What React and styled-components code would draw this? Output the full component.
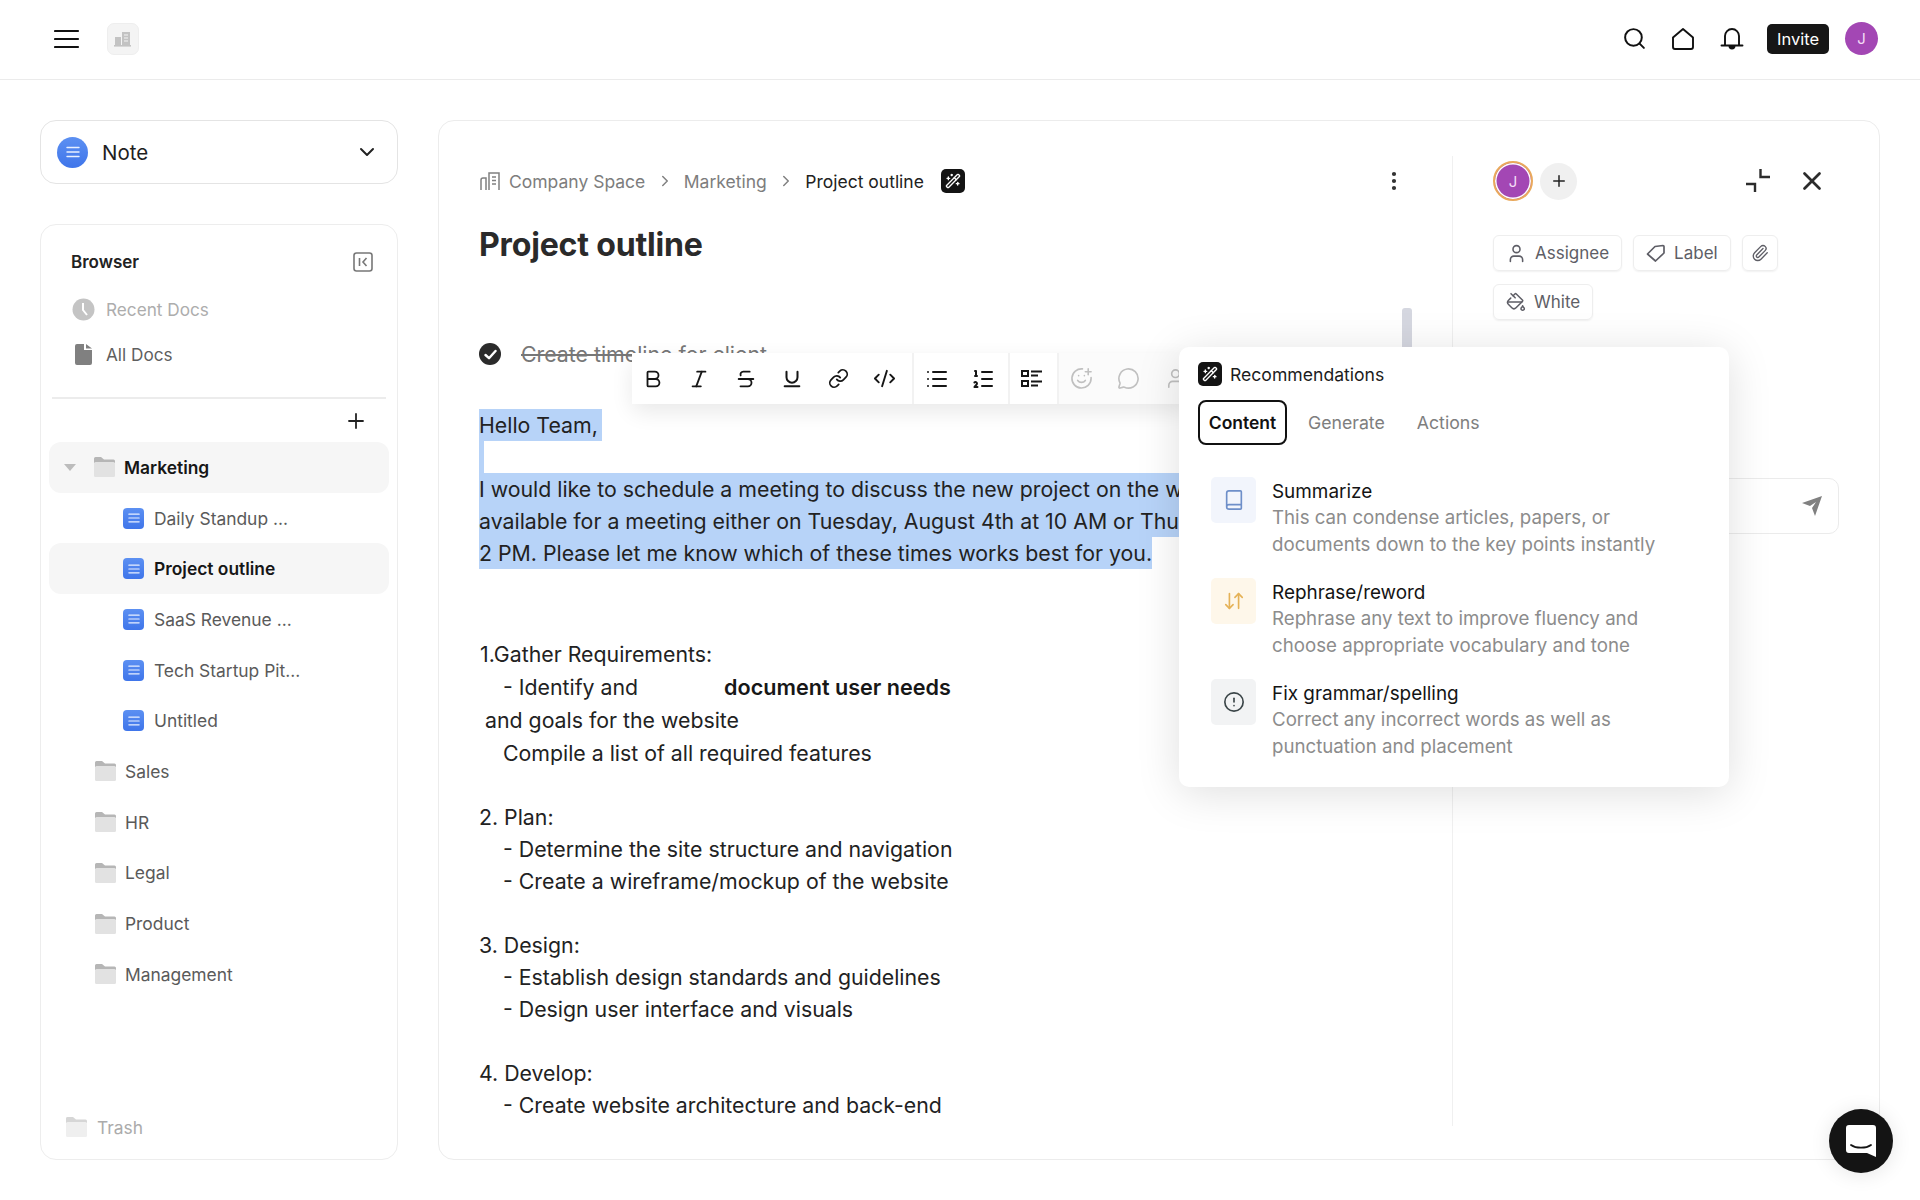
import React from "react";
import styled, { createGlobalStyle } from "styled-components";
import {
  Search, ChevronDown, ChevronRight, Plus, X, User, Paperclip, PaintBucket,
  EllipsisVertical, WandSparkles, Bold, Italic, Strikethrough, Underline, Link,
  CodeXml, List, ListOrdered, SmilePlus, MessageCircle, Book, ArrowDownUp, CircleAlert,
} from "lucide-react";

const Global = createGlobalStyle`
  html, body { margin: 0; padding: 0; background: #fff; }
  body { font-family: Inter, "Noto Sans", sans-serif; color: #222; width: 1920px; height: 1200px; overflow: hidden; -webkit-font-smoothing: antialiased; }
  * { box-sizing: border-box; }
`;

const Page = styled.div`width: 1920px; height: 1200px; position: relative; overflow: hidden; background: #fff;`;
const Header = styled.header`height: 80px; border-bottom: 1px solid #ebebeb; display: flex; align-items: center; justify-content: space-between; padding: 0 42px 2px 54px;`;
const HeaderLeft = styled.div`display: flex; align-items: center; gap: 27px;`;
const LogoTile = styled.div`width: 32px; height: 32px; border-radius: 7px; background: #f4f4f4; border: 1px solid #eeeeee; display: flex; align-items: center; justify-content: center;`;
const HeaderRight = styled.div`display: flex; align-items: center;`;
const TopIcon = styled.span`display: flex; width: 28px; height: 28px; align-items: center; justify-content: center; margin-right: 20.5px; color: #111;`;
const Invite = styled.span`margin-left: 1px; width: 62px; height: 30px; background: #161616; color: #fff; border-radius: 5px; font-size: 16.5px; display: flex; align-items: center; justify-content: center;`;
const TopAvatar = styled.span`margin-left: 16px; width: 33px; height: 33px; border-radius: 50%; background: #a347b4; color: #f3dcf6; font-size: 15px; display: flex; align-items: center; justify-content: center;`;

const Body = styled.div`display: grid; grid-template-columns: 358px 1442px; column-gap: 40px; padding: 40px 40px 0; height: 1080px;`;
const SideCol = styled.aside`display: flex; flex-direction: column; gap: 40px; height: 1040px;`;
const NoteSelect = styled.div`height: 64px; border: 1px solid #e4e4e4; border-radius: 16px; display: flex; align-items: center; padding: 0 18px 0 16px; font-size: 20.5px; color: #1e1e1e;`;
const NoteDot = styled.span`width: 31px; height: 31px; border-radius: 50%; background: linear-gradient(#5c90f2, #3f75ea); display: flex; align-items: center; justify-content: center; margin-right: 14px;`;
const NoteLabel = styled.span`flex: 1;`;
const BrowserCard = styled.div`flex: 1; border: 1px solid #ededed; border-radius: 16px; padding: 0 8px 0 8px; display: flex; flex-direction: column;`;
const BrowserHead = styled.div`height: 62px; padding: 12px 16px 0 22px; display: flex; align-items: center; justify-content: space-between; font-size: 17px; font-weight: 600; color: #222;`;
const NavRow = styled.div`height: 45px; display: flex; align-items: center; padding-left: 22px; gap: 11px; font-size: 17.2px; color: ${p => p.$muted ? "#adadad" : "#5f5f5f"};`;
const NavIcon = styled.span`width: 24px; display: flex; justify-content: center;`;
const Divider = styled.div`height: 2px; background: #ececec; margin: 20px 3px 0;`;
const AddRow = styled.div`height: 43px; display: flex; align-items: center; justify-content: flex-end; padding-right: 21px; color: #222;`;
const TreeRow = styled.div`height: 50.7px; flex: none; display: flex; align-items: center; border-radius: 12px; font-size: 17.4px; padding-left: ${p => p.$indent}px; gap: ${p => p.$gap}px; background: ${p => p.$active ? "#f6f6f6" : "transparent"}; color: ${p => p.$active ? "#161616" : "#5a5a5a"}; font-weight: ${p => p.$active ? 600 : 400};`;
const Caret = styled.span`width: 0; height: 0; border-left: 6px solid transparent; border-right: 6px solid transparent; border-top: 7px solid #bcbcbc; margin-left: -31px; margin-right: 9px;`;
const TrashRow = styled.div`margin-top: auto; margin-bottom: 7px; height: 50px; display: flex; align-items: center; padding-left: 17px; gap: 10px; font-size: 17.4px; color: #ababab;`;

const MainCard = styled.main`height: 1040px; border: 1px solid #ececec; border-radius: 16px; position: relative; display: flex;`;
const EditorCol = styled.section`width: 1013px; height: 1006px; padding-left: 40px; flex: none; position: relative; overflow: hidden;`;
const Crumbs = styled.div`height: 120px; padding: 42px 0 0; display: flex; align-items: flex-start; font-size: 17.5px; color: #7d7d7d; position: relative;`;
const CrumbInner = styled.div`height: 36px; display: flex; align-items: center; width: 100%;`;
const CrumbIcon = styled.span`display: flex; margin: 0 8px 0 1px;`;
const Crumb = styled.span`color: ${p => p.$current ? "#222" : "#7d7d7d"}; white-space: nowrap;`;
const Sep = styled.span`display: flex; width: 38.5px; justify-content: center; color: #808080;`;
const WandGap = styled.span`width: 17px;`;
const WandTile = styled.span`width: ${p => p.$size}px; height: ${p => p.$size}px; background: #141414; color: #fff; border-radius: 5px; display: flex; align-items: center; justify-content: center; flex: none;`;
const Dots = styled.span`margin-left: auto; margin-right: 46px; display: flex; color: #333;`;
const Title = styled.h1`margin: 0; font-size: 32.1px; line-height: 46px; font-weight: 700; color: #2a2a2a; letter-spacing: -0.2px; position: absolute; top: 101px;`;
const Doc = styled.div`position: absolute; left: 40px; top: 217px; width: 960px; font-size: 21.3px;`;
const TaskRow = styled.div`height: 32px; display: flex; align-items: center; gap: 20px; color: #777; text-decoration: line-through; white-space: nowrap;`;
const Check = styled.span`width: 22px; height: 22px; border-radius: 50%; background: #2b2b2b; display: flex; align-items: center; justify-content: center; flex: none;`;
const Selected = styled.div`margin-top: 39px; margin-bottom: 69px;`;
const SelLine = styled.div`height: 32px; line-height: 32px; white-space: nowrap; background: #b7d3f8; width: ${p => p.$w};`;
const Line = styled.div`height: ${p => p.$h || 32}px; line-height: ${p => p.$h || 32}px; white-space: nowrap; padding-left: ${p => p.$indent || 0}px;`;
const Strong = styled.strong`font-weight: 600; font-size: 21.6px; margin-left: 80px; color: #171717;`;
const Thumb = styled.span`position: absolute; left: 963px; top: 187px; width: 10px; height: 40px; background: #d5d7e0; border-radius: 3px 3px 0 0;`;

const RightPanel = styled.section`flex: none; width: 427px; height: 970px; margin-top: 35px; border-left: 1px solid #f0f0f0; padding: 4px 0 0 40px;`;
const PanelTop = styled.div`height: 42px; display: flex; align-items: center;`;
const RingAvatar = styled.span`width: 40px; height: 40px; border-radius: 50%; background: #a347b4; border: 2px solid #e9a95c; box-shadow: inset 0 0 0 1.5px #fff; color: #f3dcf6; font-size: 15px; display: flex; align-items: center; justify-content: center;`;
const AddCircle = styled.span`margin-left: 7px; width: 37px; height: 37px; border-radius: 50%; background: #f0f0f0; display: flex; align-items: center; justify-content: center; color: #222;`;
const PanelAction = styled.span`display: flex; color: #2c2c2c; margin-left: ${p => p.$ml}px;`;
const Chips = styled.div`display: flex; flex-wrap: wrap; gap: 13px 11px; width: 320px; margin-top: 33px;`;
const Chip = styled.span`height: 36px; border: 1px solid #eeeeee; border-radius: 6px; box-shadow: 0 1px 2px rgba(0,0,0,.06); padding: 0 ${p => p.$pr ?? 12}px 0 ${p => p.$pl ?? 12}px; display: flex; align-items: center; gap: 8px; font-size: 17px; color: #5e5e66;`;
const CommentBox = styled.div`margin-top: 158px; width: 346px; height: 56px; border: 1px solid #ebebeb; border-radius: 10px; display: flex; align-items: center; justify-content: flex-end; padding-right: 15px; color: #7f7f7f;`;

const Toolbar = styled.div`position: absolute; left: 193px; top: 232px; height: 51px; display: flex; background: #fff; border-radius: 8px; box-shadow: 0 8px 22px rgba(0,0,0,.09); z-index: 2;`;
const ToolGroup = styled.div`display: flex; align-items: center; height: 100%; padding: ${p => p.$pad}; gap: ${p => p.$gap}px; border-left: ${p => p.$sep ? "2px solid #f2f2f2" : "none"}; background: ${p => p.$faded ? "#fbfbfb" : "#fff"}; color: ${p => p.$faded ? "#c0c0c0" : "#161616"};`;
const ToolBtn = styled.span`width: 26px; display: flex; justify-content: center;`;

const Popup = styled.div`position: absolute; left: 740px; top: 226px; width: 550px; height: 440px; background: #fff; border-radius: 10px; box-shadow: 0 6px 44px rgba(0,0,0,.13); z-index: 3; padding: 15px 19px;`;
const PopHead = styled.div`height: 24px; display: flex; align-items: center; gap: 8px; font-size: 17.6px; color: #1c1c1c;`;
const PopHeadText = styled.span``;
const Tabs = styled.div`display: flex; align-items: center; margin-top: 14px; height: 45px;`;
const ActiveTab = styled.span`width: 89px; height: 45px; border: 2.5px solid #111; border-radius: 8px; display: flex; align-items: center; justify-content: center; font-size: 17.5px; font-weight: 600; color: #111;`;
const Tab = styled.span`font-size: 17.7px; color: #7e7e7e; margin-left: ${p => p.$ml}px;`;
const ItemList = styled.div`margin-top: 32px; padding-left: 13px; display: flex; flex-direction: column; gap: 20px;`;
const Item = styled.div`display: flex; gap: 16px; height: 81px;`;
const ItemIcon = styled.span`width: 45px; height: 46px; border-radius: 5px; background: ${p => p.$bg}; color: ${p => p.$fg}; display: flex; align-items: center; justify-content: center; flex: none;`;
const ItemText = styled.div``;
const ItemTitle = styled.div`font-size: 18.9px; line-height: 27px; padding-top: 1px; margin-bottom: -1px; color: #141414;`;
const ItemDesc = styled.div`font-size: 18.7px; line-height: 27px; color: #8c8c8c; white-space: nowrap;`;

const Launcher = styled.div`position: absolute; left: 1829px; top: 1109px; width: 64px; height: 64px; border-radius: 50%; background: #141414; box-shadow: 0 2px 20px rgba(0,0,0,.1); display: flex; align-items: center; justify-content: center; z-index: 5;`;

const Hamburger = () => (
  <svg width="26" height="20" viewBox="0 0 26 20"><path d="M1 2h23M1 10h23M1 18h23" stroke="#111" strokeWidth="2.2" strokeLinecap="round" /></svg>
);
const BuildingLogo = () => (
  <svg width="18" height="16" viewBox="0 0 18 16" fill="#c3c3c3"><rect x="1" y="6" width="6" height="8" /><rect x="8" y="1" width="8" height="13" /><rect x="0" y="14" width="17" height="1.6" /><path d="M10 4h4M10 7h4M10 10h4" stroke="#f4f4f4" strokeWidth="1" /></svg>
);
const HomeIcon = () => (
  <svg width="24" height="24" viewBox="0 0 24 24" fill="none" stroke="#111" strokeWidth="1.9" strokeLinejoin="round"><path d="M2 10.5 12 2l10 8.5V20a2 2 0 0 1-2 2H4a2 2 0 0 1-2-2Z" /></svg>
);
const BellIcon = () => (
  <svg width="24" height="26" viewBox="0 0 24 26" fill="none" stroke="#111" strokeWidth="1.9" strokeLinecap="round" strokeLinejoin="round"><path d="M5 19V10a7 7 0 0 1 14 0v9M1.5 19.5h21" /><path d="M9.5 20a2.5 2.5 0 0 0 5 0Z" fill="#111" /></svg>
);
const LinesIcon = ({ w = 14 }) => (
  <svg width={w} height={w} viewBox="0 0 14 14" fill="none" stroke="#e8f0ff" strokeWidth="1.4" strokeLinecap="round"><path d="M1 2.5h12M1 7h12M1 11.5h12" /></svg>
);
const Chevron = () => <ChevronDown size={24} strokeWidth={2} color="#222" />;
const CollapseIcon = () => (
  <svg width="20" height="20" viewBox="0 0 20 20" fill="none" stroke="#777" strokeWidth="1.6"><rect x="1" y="1" width="18" height="18" rx="2.5" /><path d="M6.5 6v8M13.5 6l-3.5 4 3.5 4" /></svg>
);
const ClockIcon = () => (
  <svg width="23" height="23" viewBox="0 0 23 23"><circle cx="11.5" cy="11.5" r="11" fill="#c4c4c4" /><path d="M11 5v7l4 5" stroke="#fff" strokeWidth="2" fill="none" /></svg>
);
const FileIcon = () => (
  <svg width="17" height="21" viewBox="0 0 17 21"><path d="M2 0h7v6h8v13a2 2 0 0 1-2 2H2a2 2 0 0 1-2-2V2a2 2 0 0 1 2-2ZM11 0l6 4.5h-6Z" fill="#808080" /></svg>
);
const Folder = ({ faded }) => (
  <svg width="21" height="20" viewBox="0 0 21 20" opacity={faded ? .55 : 1}><path d="M1.5 0H7l3 2.5h9.5A1.5 1.5 0 0 1 21 4v2H0V1.5A1.5 1.5 0 0 1 1.5 0Z" fill="#b6b6b6" /><rect x="0" y="5" width="21" height="15" rx="1.5" fill="#e2e2e2" /></svg>
);
const DocTile = styled.span`width: 21px; height: 21px; border-radius: 4px; background: linear-gradient(#5c90f2, #3f75ea); display: flex; align-items: center; justify-content: center; flex: none;`;
const BuildingOutline = () => (
  <svg width="21" height="19" viewBox="0 0 21 19" fill="none" stroke="#808080" strokeWidth="1.5"><path d="M1 18V8a2 2 0 0 1 2-2h3v12M9 18V1h10v17M12 5h4M12 8.5h4M12 12h4" /></svg>
);
const CheckMark = () => (
  <svg width="13" height="11" viewBox="0 0 13 11" fill="none" stroke="#fff" strokeWidth="2.4" strokeLinecap="round" strokeLinejoin="round"><path d="M1.5 6 5 9.2 11.5 2" /></svg>
);
const CollapseArrows = () => (
  <svg width="26" height="24" viewBox="0 0 26 24" fill="none" stroke="#2c2c2c" strokeWidth="2.4"><path d="M15.5 0v8H25M1 15h9v8" /></svg>
);
const TagIcon = () => (
  <svg width="20" height="20" viewBox="0 0 20 20" fill="none" stroke="#5e5e66" strokeWidth="1.7" strokeLinejoin="round"><path d="M1.5 11 9 3.5 17 2.5a1 1 0 0 1 1 1V10L9.5 18Z" /></svg>
);
const TaskList = () => (
  <svg width="22" height="20" viewBox="0 0 22 20" fill="none" stroke="#161616"><rect x="1" y="2" width="6" height="5" strokeWidth="2" /><rect x="1" y="12" width="6" height="5" strokeWidth="2" /><path d="M10 2.5h11M10 6.5h7M10 12.5h11M10 16.5h7" strokeWidth="2" /></svg>
);
const SendIcon = () => (
  <svg width="22" height="22" viewBox="0 0 22 22" fill="#808080"><path d="M21 1 14 21l-3-8 4-6-6 4-8-3Z" /></svg>
);
const MessengerIcon = () => (
  <svg width="30" height="33" viewBox="0 0 30 33"><path d="M3 0h24a3 3 0 0 1 3 3v29l-9-4H3a3 3 0 0 1-3-3V3a3 3 0 0 1 3-3Z" fill="#fff" /><path d="M5 20c5 3.6 15 3.6 20 0" stroke="#141414" strokeWidth="1.8" fill="none" strokeLinecap="round" /></svg>
);

const docs = ["Daily Standup ...", "Project outline", "SaaS Revenue ...", "Tech Startup Pit...", "Untitled"];
const folders = ["Sales", "HR", "Legal", "Product", "Management"];
const items = [
  { t: "Summarize", d: ["This can condense articles, papers, or", "documents down to the key points instantly"], bg: "#f2f5fc", fg: "#6e8fc9", I: Book },
  { t: "Rephrase/reword", d: ["Rephrase any text to improve fluency and", "choose appropriate vocabulary and tone"], bg: "#fef7ea", fg: "#e5b257", I: ArrowDownUp },
  { t: "Fix grammar/spelling", d: ["Correct any incorrect words as well as", "punctuation and placement"], bg: "#f2f3f4", fg: "#3b4548", I: CircleAlert },
];

export default function App() {
  return (
    <Page>
      <Global />
      <Header>
        <HeaderLeft>
          <Hamburger />
          <LogoTile><BuildingLogo /></LogoTile>
        </HeaderLeft>
        <HeaderRight>
          <TopIcon><Search size={25} strokeWidth={1.9} /></TopIcon>
          <TopIcon><HomeIcon /></TopIcon>
          <TopIcon><BellIcon /></TopIcon>
          <Invite>Invite</Invite>
          <TopAvatar>J</TopAvatar>
        </HeaderRight>
      </Header>
      <Body>
        <SideCol>
          <NoteSelect>
            <NoteDot><LinesIcon /></NoteDot>
            <NoteLabel>Note</NoteLabel>
            <Chevron />
          </NoteSelect>
          <BrowserCard>
            <BrowserHead>Browser<CollapseIcon /></BrowserHead>
            <NavRow $muted><NavIcon><ClockIcon /></NavIcon>Recent Docs</NavRow>
            <NavRow><NavIcon><FileIcon /></NavIcon>All Docs</NavRow>
            <Divider />
            <AddRow><Plus size={24} strokeWidth={1.8} /></AddRow>
            <TreeRow $active $indent={46} $gap={9}><Caret /><Folder />Marketing</TreeRow>
            {docs.map(d => (
              <TreeRow key={d} $indent={74} $gap={10} $active={d === "Project outline"}>
                <DocTile><LinesIcon w={12} /></DocTile>{d}
              </TreeRow>
            ))}
            {folders.map(f => (
              <TreeRow key={f} $indent={46} $gap={9}><Folder />{f}</TreeRow>
            ))}
            <TrashRow><Folder faded />Trash</TrashRow>
          </BrowserCard>
        </SideCol>
        <MainCard>
          <EditorCol>
            <Crumbs>
              <CrumbInner>
                <CrumbIcon><BuildingOutline /></CrumbIcon>
                <Crumb>Company Space</Crumb>
                <Sep><ChevronRight size={18} /></Sep>
                <Crumb>Marketing</Crumb>
                <Sep><ChevronRight size={18} /></Sep>
                <Crumb $current>Project outline</Crumb>
                <WandGap />
                <WandTile $size={24}><WandSparkles size={16} /></WandTile>
                <Dots><EllipsisVertical size={24} strokeWidth={2.2} /></Dots>
              </CrumbInner>
            </Crumbs>
            <Title>Project outline</Title>
            <Doc>
              <TaskRow><Check><CheckMark /></Check>Create timeline for client</TaskRow>
              <Selected>
                <SelLine $w="123px">Hello Team,</SelLine>
                <SelLine $w="5px" />
                <SelLine $w="100%">I would like to schedule a meeting to discuss the new project on the w</SelLine>
                <SelLine $w="100%">available for a meeting either on Tuesday, August 4th at 10 AM or Thu</SelLine>
                <SelLine $w="673px">2 PM. Please let me know which of these times works best for you.</SelLine>
              </Selected>
              <Line $h={33} $indent={1}>1.Gather Requirements:</Line>
              <Line $h={33} $indent={24}>- Identify and <Strong>document user needs</Strong></Line>
              <Line $h={33} $indent={6}>and goals for the website</Line>
              <Line $h={33} $indent={24}>Compile a list of all required features</Line>
              <Line $h={31} />
              <Line>2. Plan:</Line>
              <Line $indent={24}>- Determine the site structure and navigation</Line>
              <Line $indent={24}>- Create a wireframe/mockup of the website</Line>
              <Line />
              <Line>3. Design:</Line>
              <Line $indent={24}>- Establish design standards and guidelines</Line>
              <Line $indent={24}>- Design user interface and visuals</Line>
              <Line />
              <Line>4. Develop:</Line>
              <Line $indent={24}>- Create website architecture and back-end</Line>
            </Doc>
            <Thumb />
          </EditorCol>
          <RightPanel>
            <PanelTop>
              <RingAvatar>J</RingAvatar>
              <AddCircle><Plus size={18} strokeWidth={2} /></AddCircle>
              <PanelAction $ml={168}><CollapseArrows /></PanelAction>
              <PanelAction $ml={26}><X size={30} strokeWidth={2.2} /></PanelAction>
            </PanelTop>
            <Chips>
              <Chip><User size={21} strokeWidth={1.8} />Assignee</Chip>
              <Chip><TagIcon />Label</Chip>
              <Chip $pl={8} $pr={8}><Paperclip size={18} strokeWidth={1.8} /></Chip>
              <Chip><PaintBucket size={20} strokeWidth={1.8} />White</Chip>
            </Chips>
            <CommentBox><SendIcon /></CommentBox>
          </RightPanel>
          <Toolbar>
            <ToolGroup $pad="0 14px 0 8px" $gap={20.4}>
              <ToolBtn><Bold size={22} strokeWidth={2} /></ToolBtn>
              <ToolBtn><Italic size={22} strokeWidth={2} /></ToolBtn>
              <ToolBtn><Strikethrough size={22} strokeWidth={2} /></ToolBtn>
              <ToolBtn><Underline size={22} strokeWidth={2.2} /></ToolBtn>
              <ToolBtn><Link size={21} strokeWidth={2} /></ToolBtn>
              <ToolBtn><CodeXml size={23} strokeWidth={2} /></ToolBtn>
            </ToolGroup>
            <ToolGroup $sep $pad="0 12px 0 10px" $gap={20}>
              <ToolBtn><List size={24} strokeWidth={2} /></ToolBtn>
              <ToolBtn><ListOrdered size={24} strokeWidth={2} /></ToolBtn>
            </ToolGroup>
            <ToolGroup $sep $pad="0 12px 0 9px">
              <ToolBtn><TaskList /></ToolBtn>
            </ToolGroup>
            <ToolGroup $sep $faded $pad="0 0 0 10px" $gap={21}>
              <ToolBtn><SmilePlus size={23} strokeWidth={1.7} /></ToolBtn>
              <ToolBtn><MessageCircle size={23} strokeWidth={1.7} /></ToolBtn>
              <ToolBtn><User size={23} strokeWidth={1.7} /></ToolBtn>
            </ToolGroup>
          </Toolbar>
          <Popup>
            <PopHead><WandTile $size={24}><WandSparkles size={16} /></WandTile><PopHeadText>Recommendations</PopHeadText></PopHead>
            <Tabs>
              <ActiveTab>Content</ActiveTab>
              <Tab $ml={21}>Generate</Tab>
              <Tab $ml={32}>Actions</Tab>
            </Tabs>
            <ItemList>
              {items.map(({ t, d, bg, fg, I }) => (
                <Item key={t}>
                  <ItemIcon $bg={bg} $fg={fg}><I size={22} strokeWidth={1.8} /></ItemIcon>
                  <ItemText>
                    <ItemTitle>{t}</ItemTitle>
                    {d.map(x => <ItemDesc key={x}>{x}</ItemDesc>)}
                  </ItemText>
                </Item>
              ))}
            </ItemList>
          </Popup>
        </MainCard>
      </Body>
      <Launcher><MessengerIcon /></Launcher>
    </Page>
  );
}
